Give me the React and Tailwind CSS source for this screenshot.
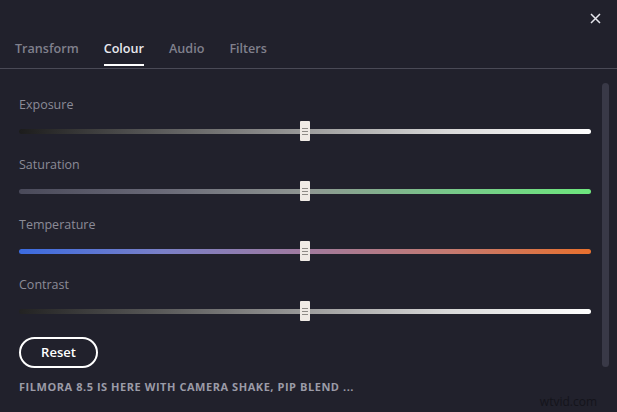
import { useState } from "react";

const sliders = [
  { name: "Exposure", track: "bg-[linear-gradient(90deg,#1c1c1c_0%,#5c5c5c_25%,#9a9a9a_50%,#d8d8d8_75%,#ffffff_100%)]" },
  { name: "Saturation", track: "bg-[linear-gradient(90deg,#4a4a5a_0%,#6a6a78_25%,#8f9592_50%,#78c88a_75%,#6ee67e_100%)]" },
  { name: "Temperature", track: "bg-[linear-gradient(90deg,#3b6be0_0%,#7a80c8_25%,#a07a9e_50%,#c47a72_75%,#e8702e_100%)]" },
  { name: "Contrast", track: "bg-[linear-gradient(90deg,#222222_0%,#5a5a5a_25%,#9a9a9a_50%,#d8d8d8_75%,#ffffff_100%)]" },
];

const tabs = ["Transform", "Colour", "Audio", "Filters"];

const Slider = ({ name, track }) => (
  <div className="flex flex-col">
    <div className="h-[16px] text-[12.5px] leading-[16px] text-[#8b8b97]">{name}</div>
    <div className="relative mt-[8px] flex h-[20px] items-center">
      <div className={`h-[5px] w-full rounded-full ${track}`} />
      {/* thumb */}
      <div className="absolute left-[281px] top-0 flex h-[20px] w-[10px] flex-col items-center justify-center gap-[2px] rounded-[1px] bg-[#efeae5]">
        <span className="h-px w-[6px] bg-[#8d8a86]" />
        <span className="h-px w-[6px] bg-[#8d8a86]" />
        <span className="h-px w-[6px] bg-[#8d8a86]" />
      </div>
    </div>
  </div>
);

const App = () => {
  const [tab, setTab] = useState("Colour");

  return (
    <div className="relative flex h-[412px] w-[617px] flex-col overflow-hidden bg-[#21212c] font-['Open_Sans',sans-serif]">
      <div className="flex h-[36px] items-center justify-end pr-[16px]">
        <svg width="11" height="11" viewBox="0 0 11 11" className="text-[#e6e6ec]">
          <path d="M1 1L10 10M10 1L1 10" stroke="currentColor" strokeWidth="1.5" />
        </svg>
      </div>

      <div className="flex h-[33px] gap-[25px] border-b border-[#4a4a56] pl-[15px]">
        {tabs.map((t) => (
          <button key={t} onClick={() => setTab(t)} className="flex flex-col items-stretch pt-[5px]">
            <span className={`text-[12.6px] font-semibold leading-[16px] ${t === tab ? "text-[#e9e9ef]" : "text-[#80808c]"}`}>{t}</span>
            {t === tab && <span className="mt-[7px] h-[2px] bg-white" />}
          </button>
        ))}
      </div>

      <div className="flex flex-1">
        <div className="flex w-[591px] flex-col pl-[19px] pt-[28px]">
          <div className="flex flex-col gap-[16px]">
            {sliders.map((s) => (
              <Slider key={s.name} {...s} />
            ))}
          </div>
          <button className="mt-[16px] h-[31px] w-[79px] rounded-full border-2 border-white text-[13px] font-semibold text-white">
            Reset
          </button>
          <div className="mt-[12px] text-[11px] font-bold leading-[14px] tracking-[0.55px] text-[#9b9ba7]">
            FILMORA 8.5 IS HERE WITH CAMERA SHAKE, PIP BLEND ...
          </div>
        </div>
        <div className="ml-[11px] mt-[14px] h-[284px] w-[7px] rounded-full bg-[#393947]" />
      </div>

      <div className="absolute bottom-[3px] right-[20px] text-[12px] leading-[14px] text-[#14141b]">wtvid.com</div>
    </div>
  );
};

export default App;
